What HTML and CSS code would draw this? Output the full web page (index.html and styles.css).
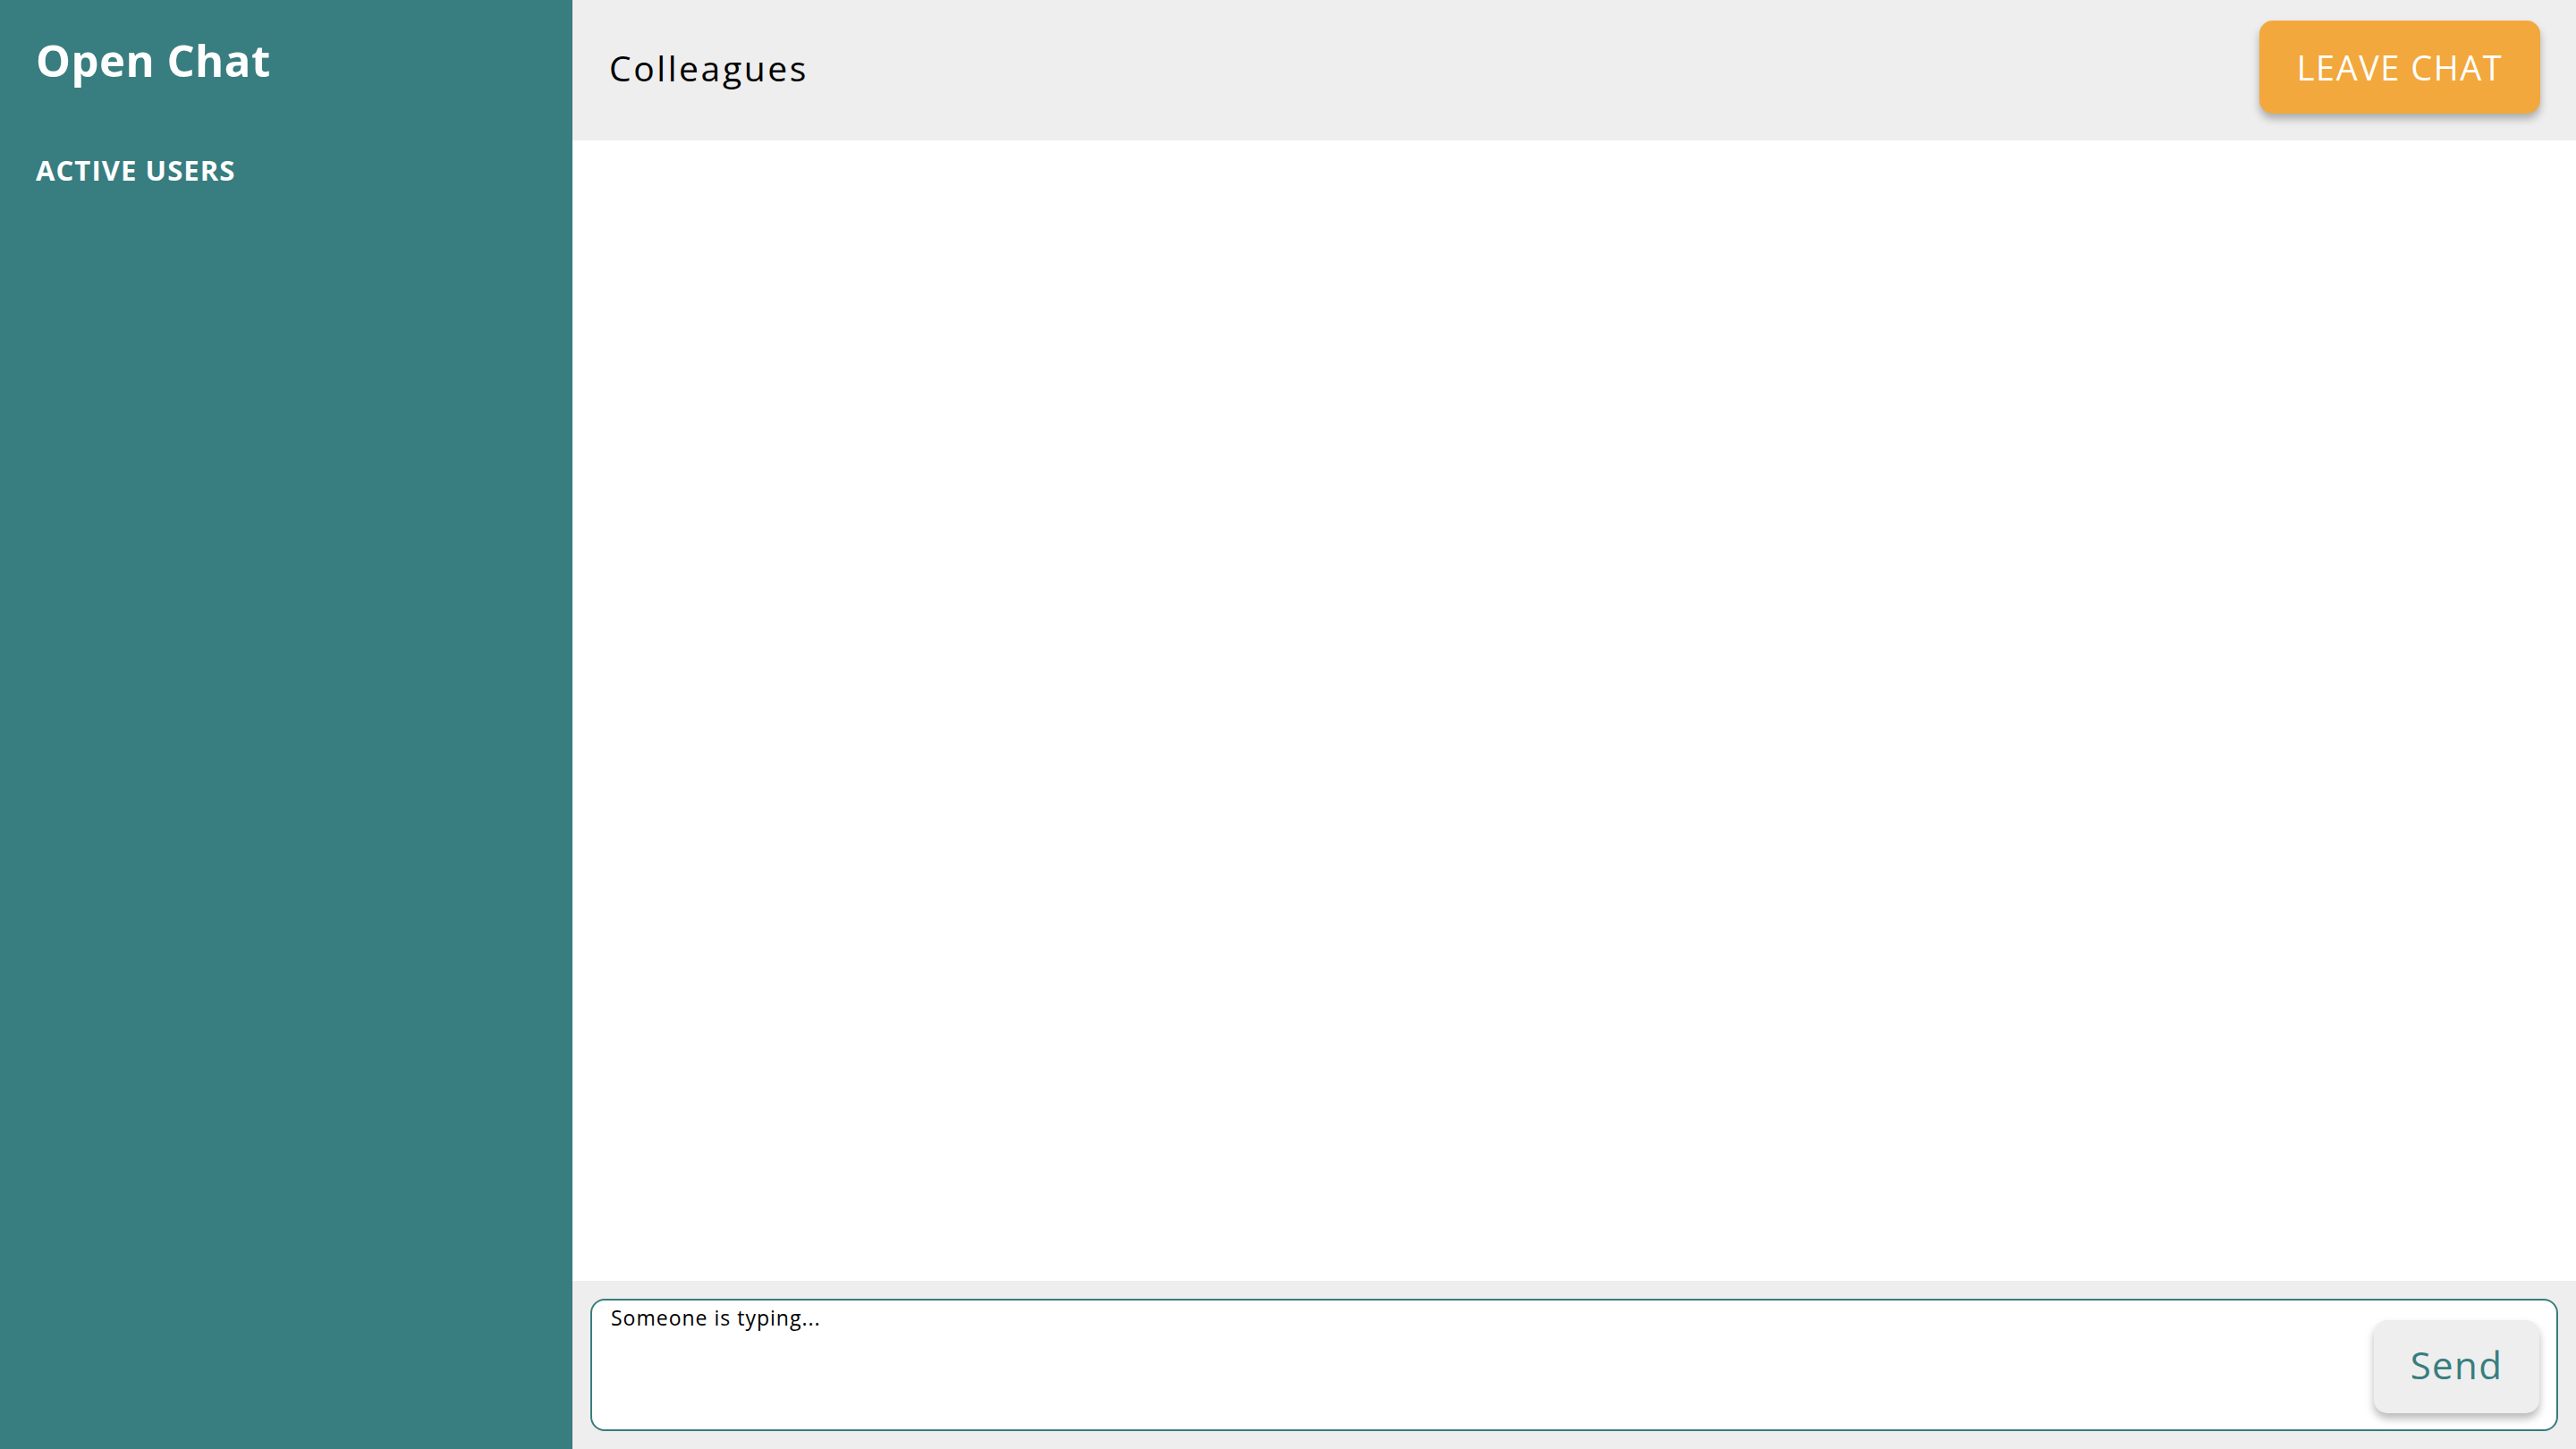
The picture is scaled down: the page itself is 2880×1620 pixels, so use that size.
FILE: index.html
```html
<!DOCTYPE html>
<html lang="en">
<head>
<meta charset="utf-8">
<title>Open Chat</title>
<link rel="stylesheet" href="styles.css">
</head>
<body>
<div class="app">
  <aside class="sidebar">
    <h1 class="brand">Open Chat</h1>
    <h2 class="section-title">ACTIVE USERS</h2>
  </aside>
  <main class="chat">
    <header class="chat-header">
      <h2 class="room-name">Colleagues</h2>
      <button class="leave-btn" type="button">LEAVE CHAT</button>
    </header>
    <section class="messages"></section>
    <footer class="composer">
      <form class="composer-box">
        <span class="typing">Someone is typing...</span>
        <button class="send-btn" type="button">Send</button>
      </form>
    </footer>
  </main>
</div>
</body>
</html>
```
FILE: styles.css
```css
* { box-sizing: border-box; }
html, body { margin: 0; padding: 0; height: 100%; }
body {
  font-family: "Open Sans", "DejaVu Sans", sans-serif;
  color: #000;
  background: #fff;
}
.app {
  display: grid;
  grid-template-columns: 640px 1fr;
  height: 100vh;
}
.sidebar {
  background: #387d7f;
  color: #fff;
  padding: 40px;
  display: flex;
  flex-direction: column;
}
.brand {
  margin: 0;
  font-size: 49px;
  font-weight: 700;
  line-height: 1;
  letter-spacing: 0.5px;
  padding-top: 3px;
}
.section-title {
  margin: 0;
  margin-top: 83px;
  font-size: 31px;
  font-weight: 700;
  line-height: 1;
  letter-spacing: 1.1px;
}
.chat {
  display: flex;
  flex-direction: column;
  min-height: 0;
}
.chat-header {
  background: #eeeeee;
  height: 157px;
  padding: 23px 40px 30px 41px;
  display: flex;
  align-items: center;
  justify-content: space-between;
}
.room-name {
  margin: 0;
  font-size: 39px;
  font-weight: 400;
  line-height: 1;
  letter-spacing: 2.6px;
}
.leave-btn {
  height: 104px;
  width: 314px;
  border: none;
  border-radius: 15px;
  background: #f2a83c;
  color: #fff;
  font-family: inherit;
  font-size: 38px;
  font-weight: 400;
  letter-spacing: 1.5px;
  box-shadow: 0 6px 10px rgba(0, 0, 0, 0.28);
  padding: 0;
}
.messages {
  flex: 1;
  background: #fff;
}
.composer {
  background: #eeeeee;
  height: 188px;
  padding: 20px;
}
.composer-box {
  margin: 0;
  height: 100%;
  border: 2px solid #387d7f;
  border-radius: 16px;
  background: #fff;
  display: flex;
  justify-content: space-between;
  align-items: flex-start;
  padding: 5px 19px 18px 21px;
}
.typing {
  font-size: 23px;
  line-height: 1.3;
  letter-spacing: 1px;
}
.send-btn {
  align-self: flex-end;
  height: 104px;
  width: 185px;
  border: none;
  border-radius: 15px;
  background: #eeeeee;
  color: #387d7f;
  font-family: inherit;
  font-size: 42px;
  font-weight: 400;
  letter-spacing: 1.4px;
  box-shadow: 0 6px 10px rgba(0, 0, 0, 0.28);
  padding: 0 0 6px;
}
```
